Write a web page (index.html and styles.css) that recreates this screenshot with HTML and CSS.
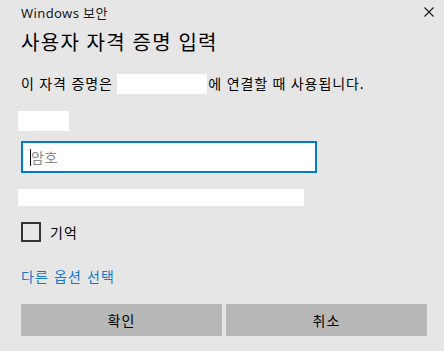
FILE: index.html
```html
<!DOCTYPE html>
<html lang="ko">
<head>
  <meta charset="UTF-8" />
  <meta name="viewport" content="width=device-width, initial-scale=1.0"/>
  <title>Windows 보안</title>
  <link rel="stylesheet" href="styles.css">
</head>
<body>
  <div class="dialog">
    <div class="titlebar">
      <span class="app">Windows 보안</span>
      <svg class="close" width="10" height="10" viewBox="0 0 10 10">
        <path d="M0.5 0.5 L9.5 9.5 M9.5 0.5 L0.5 9.5" stroke="#1a1a1a" stroke-width="1.1" fill="none"/>
      </svg>
    </div>

    <h1>사용자 자격 증명 입력</h1>

    <p class="desc">이 자격 증명은 <span class="blank host"></span>에 연결할 때 사용됩니다.</p>

    <div class="blank user"></div>

    <div class="field">
      <input type="password" placeholder="암호">
      <span class="caret"></span>
    </div>

    <div class="blank hint"></div>

    <label class="check">
      <span class="box"></span>
      <span>기억</span>
    </label>

    <a class="more" href="#">다른 옵션 선택</a>

    <div class="actions">
      <button>확인</button>
      <button>취소</button>
    </div>
  </div>
</body>
</html>
```

FILE: styles.css
```css
body {
  margin: 0;
  background-color: #e6e6e6;
  font-family: "Noto Sans", "Noto Sans CJK KR", sans-serif;
  color: #000;
}
.dialog {
  width: 444px;
  height: 351px;
  padding: 0 17px 0 21px;
  box-sizing: border-box;
}
.titlebar {
  height: 24px;
  display: flex;
  align-items: center;
  justify-content: space-between;
  font-size: 13px;
  letter-spacing: 0.4px;
  color: #1a1a1a;
}
.titlebar .close {
  margin-right: -7px;
}
h1 {
  margin: 5px 0 0;
  font-size: 20px;
  font-weight: normal;
  line-height: 28px;
  letter-spacing: 1.3px;
}
.desc {
  margin: 17px 0 0;
  font-size: 14px;
  line-height: 20px;
  letter-spacing: 0.9px;
  display: flex;
  align-items: center;
  white-space: pre;
}
.blank {
  background-color: #fff;
}
.host {
  display: inline-block;
  width: 90px;
  height: 20px;
  margin-right: 1px;
}
.user {
  width: 51px;
  height: 20px;
  margin: 17px 0 0 -3px;
}
.field {
  position: relative;
  margin-top: 10px;
  width: 296px;
}
.field input {
  display: block;
  width: 296px;
  height: 32px;
  box-sizing: border-box;
  border: 2px solid #0078d7;
  padding: 0 8px;
  font-family: inherit;
  font-size: 14px;
  letter-spacing: 0.6px;
  outline: none;
  background-color: #fff;
}
.field input::placeholder {
  color: #8a8a8a;
}
.caret {
  position: absolute;
  left: 9px;
  top: 8px;
  width: 1px;
  height: 17px;
  background-color: #000;
}
.hint {
  width: 286px;
  height: 17px;
  margin: 16px 0 0 -3px;
}
.check {
  display: flex;
  align-items: center;
  gap: 9px;
  margin-top: 16px;
  font-size: 14px;
  letter-spacing: 1px;
  height: 20px;
}
.check .box {
  width: 20px;
  height: 20px;
  box-sizing: border-box;
  border: 2px solid #333;
}
.more {
  display: block;
  margin-top: 25px;
  font-size: 14px;
  line-height: 20px;
  letter-spacing: 1.2px;
  color: #1477cc;
  text-decoration: none;
}
.actions {
  display: flex;
  gap: 4px;
  margin-top: 17px;
}
.actions button {
  width: 201px;
  height: 32px;
  border: none;
  background-color: #b7b7b7;
  font-family: inherit;
  font-size: 14px;
  letter-spacing: 1px;
  color: #000;
}
```
